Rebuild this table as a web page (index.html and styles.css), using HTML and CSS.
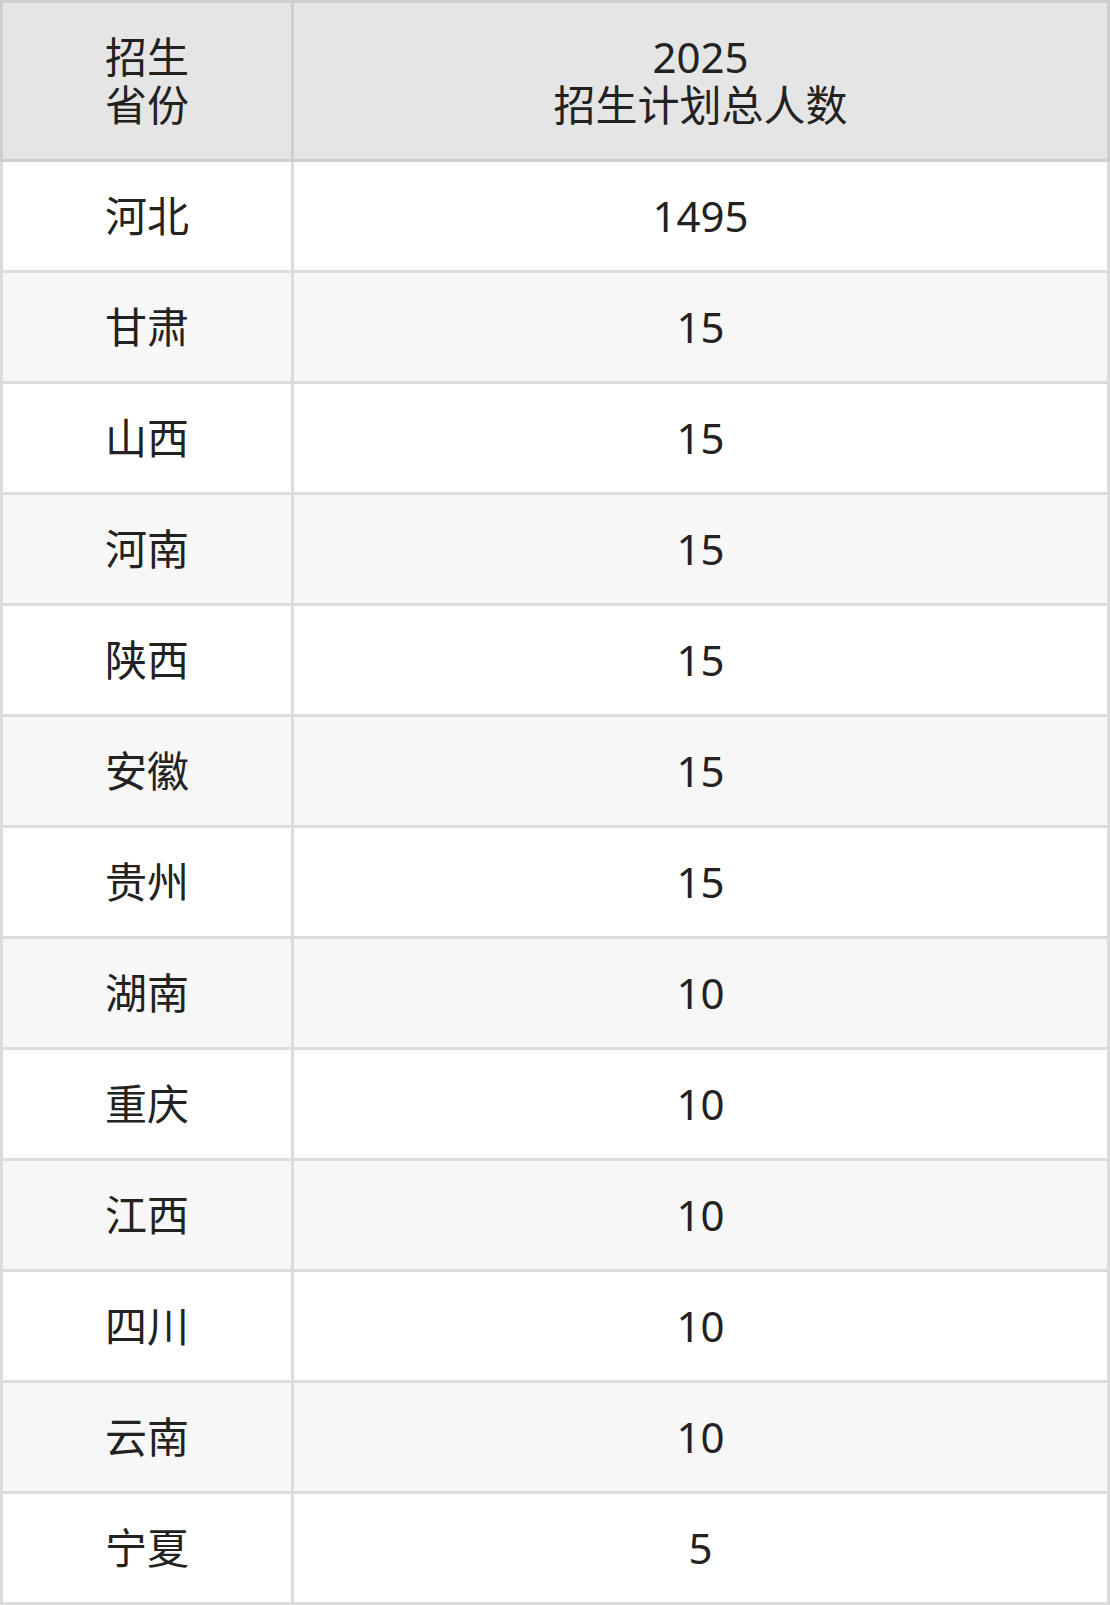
FILE: index.html
```html
<!DOCTYPE html>
<html lang="zh-CN">
<head>
<meta charset="utf-8">
<title>招生计划</title>
<link rel="stylesheet" href="styles.css">
</head>
<body>
<table class="plan">
  <thead>
    <tr><th class="c1">招生<br>省份</th><th class="c2">2025<br>招生计划总人数</th></tr>
  </thead>
  <tbody>
    <tr><td>河北</td><td>1495</td></tr>
    <tr><td>甘肃</td><td>15</td></tr>
    <tr><td>山西</td><td>15</td></tr>
    <tr><td>河南</td><td>15</td></tr>
    <tr><td>陕西</td><td>15</td></tr>
    <tr><td>安徽</td><td>15</td></tr>
    <tr><td>贵州</td><td>15</td></tr>
    <tr><td>湖南</td><td>10</td></tr>
    <tr><td>重庆</td><td>10</td></tr>
    <tr><td>江西</td><td>10</td></tr>
    <tr><td>四川</td><td>10</td></tr>
    <tr><td>云南</td><td>10</td></tr>
    <tr><td>宁夏</td><td>5</td></tr>
  </tbody>
</table>
</body>
</html>
```
FILE: styles.css
```css
html, body {
  margin: 0;
  padding: 0;
  background: #ffffff;
}
.plan {
  border-collapse: separate;
  border-spacing: 0;
  width: 1110px;
  font-family: "Noto Sans", "Noto Sans CJK SC", sans-serif;
  font-size: 42px;
  line-height: 48px;
  color: #222222;
}
.plan th, .plan td {
  padding: 30px 0;
  text-align: center;
  vertical-align: middle;
  font-weight: normal;
  border-right: 3px solid #dcdcdc;
  border-bottom: 3px solid #dcdcdc;
}
.plan th {
  background: #e5e5e5;
  border-color: #cfcfcf;
  border-top: 3px solid #cfcfcf;
}
.plan th.c1, .plan td:first-child {
  border-left: 3px solid #dcdcdc;
}
.plan th.c1 {
  border-left-color: #cfcfcf;
  width: 288px;
}
.plan tbody tr:nth-child(odd) {
  background: #ffffff;
}
.plan tbody tr:nth-child(even) {
  background: #f7f7f7;
}
```
